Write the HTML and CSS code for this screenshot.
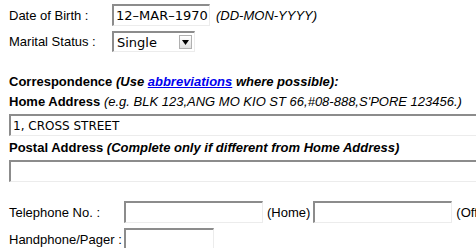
FILE: index.html
```html
<!DOCTYPE html>
<html>
<head>
<meta charset="utf-8">
<link rel="stylesheet" href="styles.css">
</head>
<body>
<div class="page">
  <div class="row r-dob">
    <span class="label">Date of Birth :</span>
    <div class="field f-dob"><span class="val">12–MAR–1970</span></div>
    <em class="hint">(DD-MON-YYYY)</em>
  </div>
  <div class="row r-marital">
    <span class="label">Marital Status :</span>
    <div class="select"><span class="val">Single</span><span class="arrow"><svg width="7" height="5" viewBox="0 0 7 5"><path d="M0 0H7L3.5 5Z" fill="#000"/></svg></span></div>
  </div>
  <div class="line l-corr"><b>Correspondence</b> <b><em>(Use <a href="#">abbreviations</a> where possible):</em></b></div>
  <div class="line l-home"><b>Home Address</b> <em>(e.g. BLK 123,ANG MO KIO ST 66,#08-888,S'PORE 123456.)</em></div>
  <div class="field f-wide f-home"><span class="val">1, CROSS STREET</span></div>
  <div class="line l-postal"><b>Postal Address</b> <b><em>(Complete only if different from Home Address)</em></b></div>
  <div class="field f-wide f-postal"></div>
  <div class="row r-tel">
    <span class="label label2">Telephone No. :</span>
    <div class="field f-tel"></div>
    <span class="tag">(Home)</span>
    <div class="field f-tel"></div>
    <span class="tag">(Office)</span>
  </div>
  <div class="row r-hp">
    <span class="label label2">Handphone/Pager :</span>
    <div class="field f-hp"></div>
  </div>
</div>
</body>
</html>
```
FILE: styles.css
```css
html, body {
  margin: 0;
  padding: 0;
  background: #fff;
  overflow: hidden;
}
body {
  width: 476px;
  height: 248px;
  font-family: "Liberation Sans", Arial, sans-serif;
  font-size: 13px;
  color: #000;
}
.page {
  padding: 4px 0 0 9px;
  white-space: nowrap;
}
.row {
  display: flex;
  align-items: center;
}
.label {
  width: 103px;
  flex: none;
}
.label2 {
  width: 115px;
}
.field {
  box-sizing: border-box;
  height: 22px;
  border-top: 2px solid #8c8c8c;
  border-left: 2px solid #8c8c8c;
  border-right: 1px solid #ececec;
  border-bottom: 1px solid #ececec;
  background: #fff;
  display: flex;
  align-items: center;
  padding-left: 2px;
  flex: none;
}
.val {
  font-family: "DejaVu Sans", Verdana, sans-serif;
  font-size: 13px;
}
.f-home .val {
  font-size: 12px;
}
.f-dob {
  width: 98px;
}
.hint {
  margin-left: 6px;
}
.r-marital {
  margin-top: 5px;
}
.select {
  box-sizing: border-box;
  width: 83px;
  height: 21px;
  border-top: 2px solid #8c8c8c;
  border-left: 2px solid #8c8c8c;
  border-right: 1px solid #ececec;
  border-bottom: 1px solid #ececec;
  display: flex;
  align-items: center;
  justify-content: space-between;
  padding: 0 2px 0 3px;
}
.arrow {
  box-sizing: border-box;
  width: 13px;
  height: 14px;
  border: 1px solid #b0b0b0;
  background: linear-gradient(#ffffff, #e0e0e0);
  display: flex;
  align-items: center;
  justify-content: center;
}
.line {
  height: 21px;
  line-height: 21px;
}
.l-corr {
  margin-top: 19px;
}
.l-home {
  height: 20px;
  line-height: 20px;
}
a {
  color: #0000ee;
}
.f-wide {
  width: 520px;
  height: 22px;
}
.f-home {
  margin-top: 2px;
}
.l-postal {
  margin-top: 1px;
}
.f-postal {
  margin-top: 2px;
}
.r-tel {
  margin-top: 19px;
}
.f-tel {
  width: 139px;
  height: 22px;
}
.tag {
  margin: 0 3px 0 4px;
}
.r-hp {
  margin-top: 5px;
}
.f-hp {
  width: 90px;
}
```
